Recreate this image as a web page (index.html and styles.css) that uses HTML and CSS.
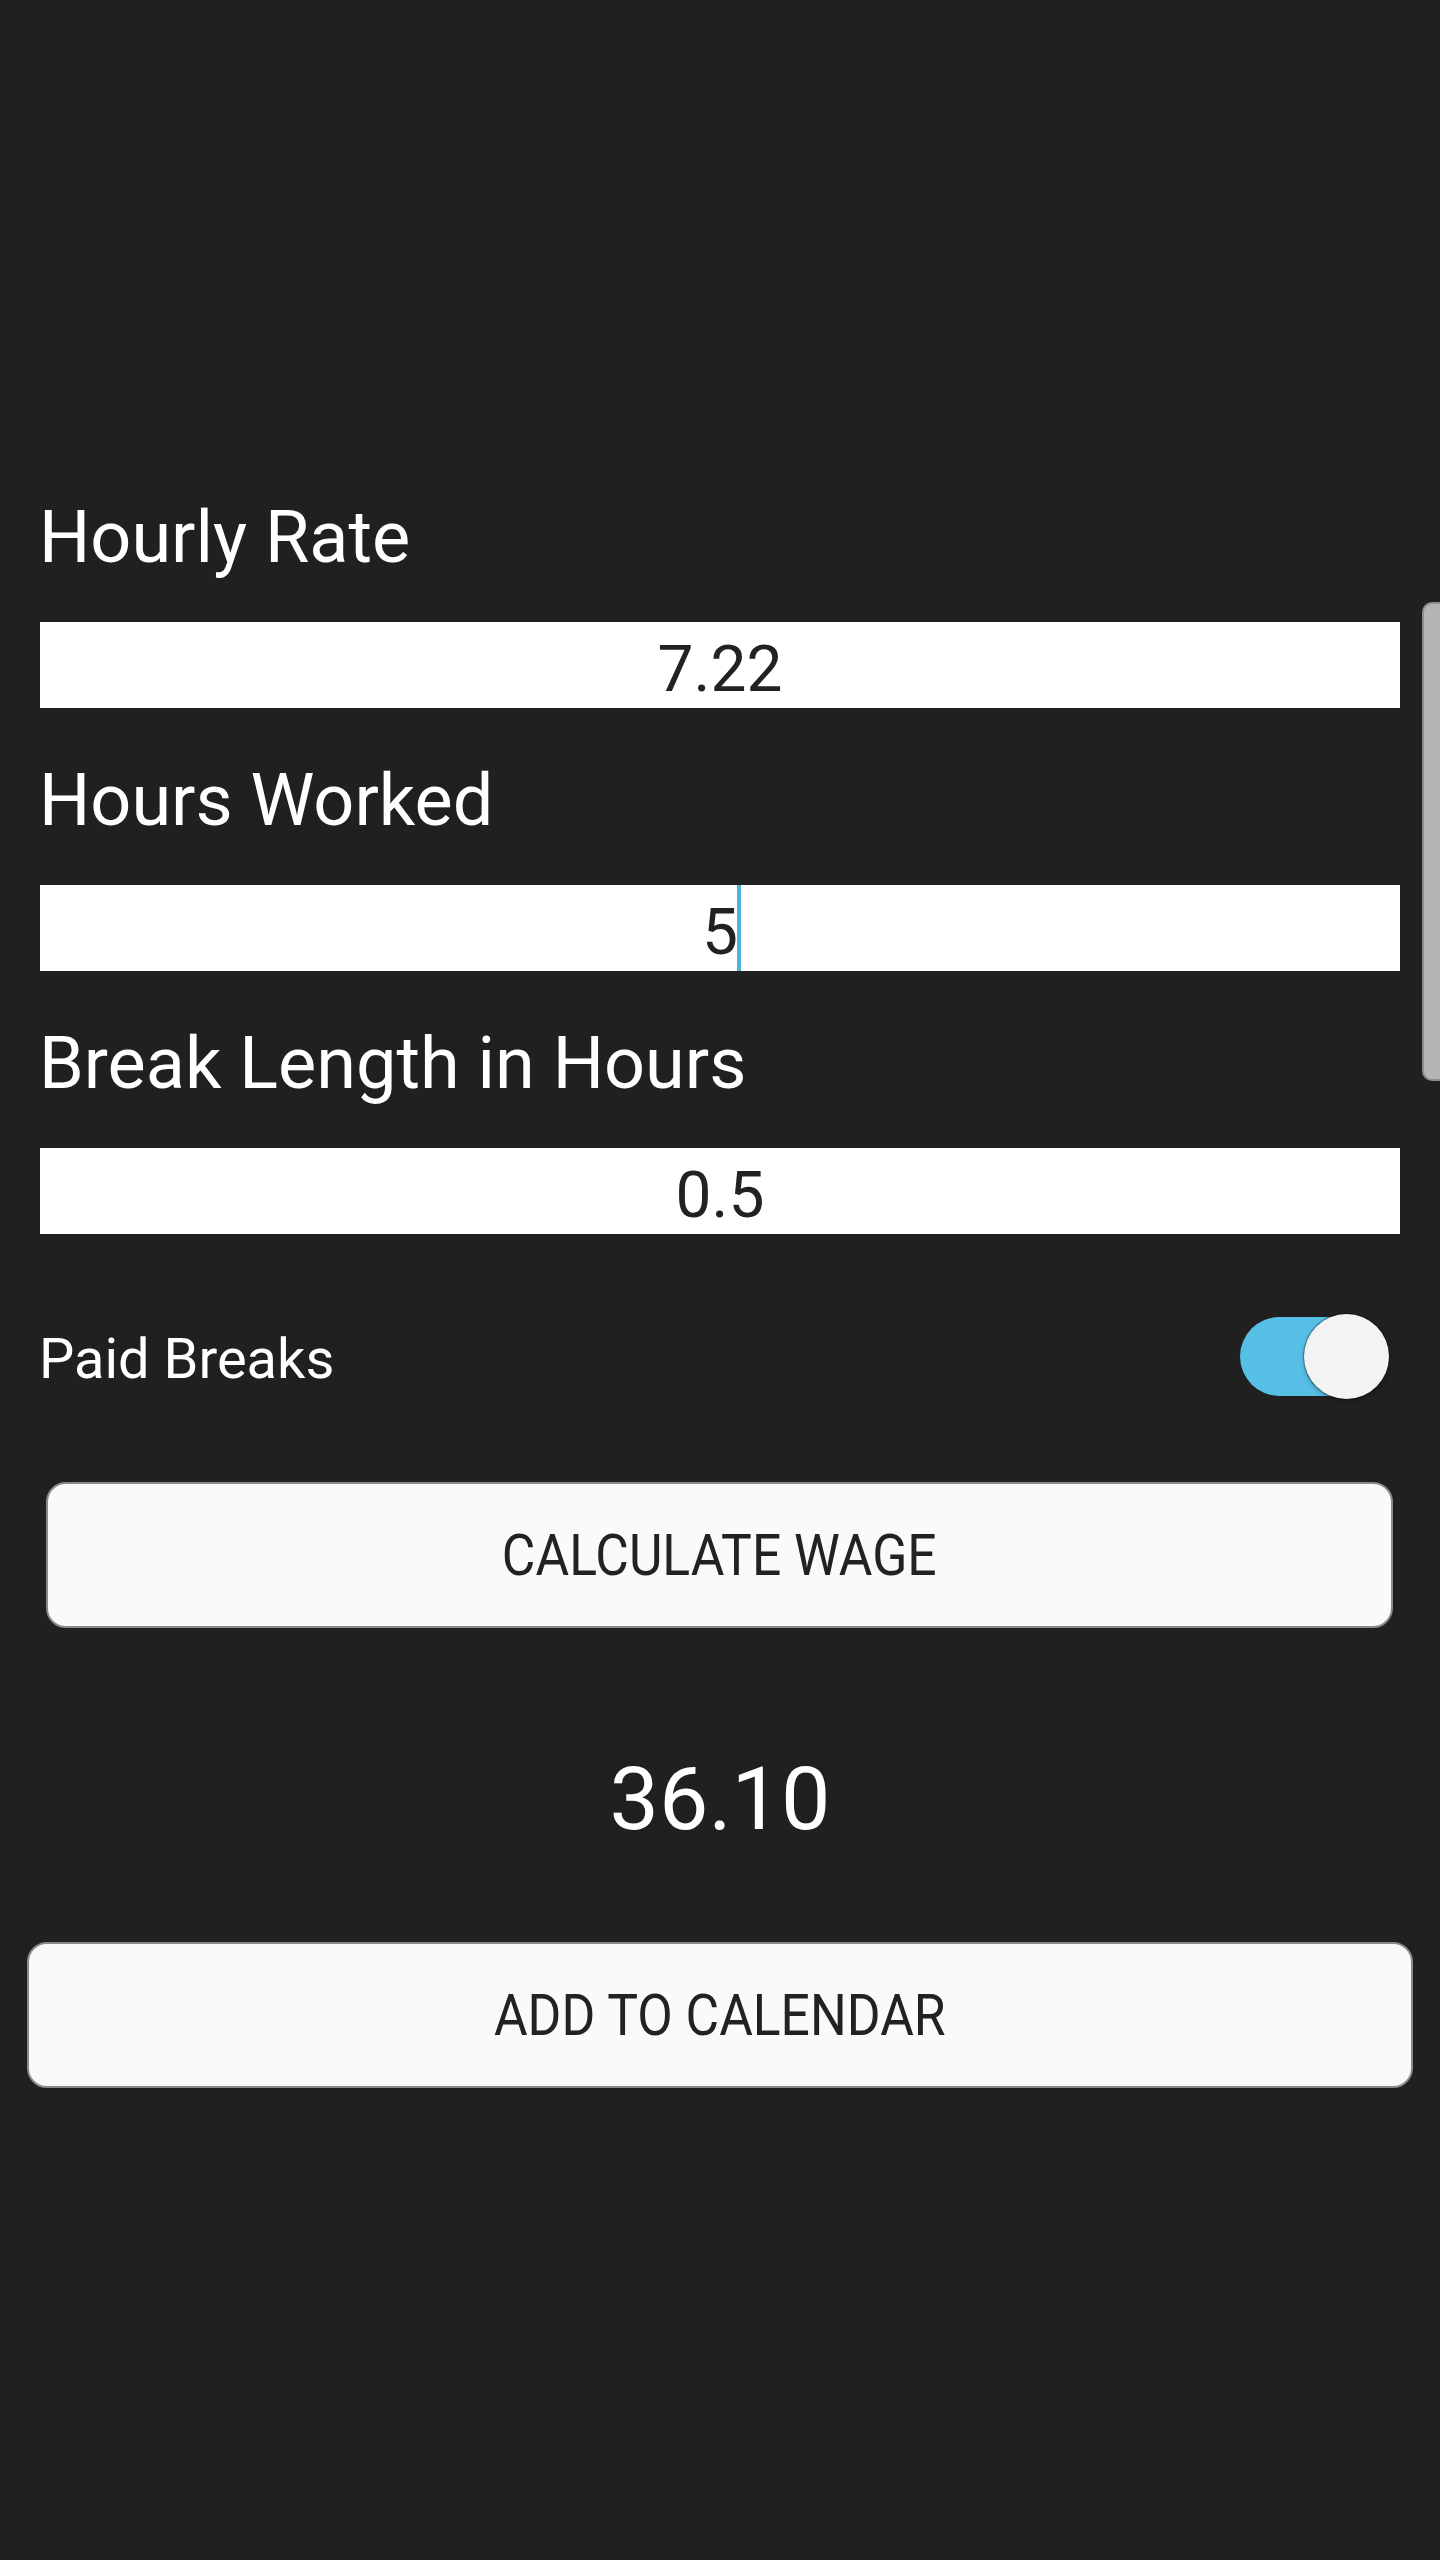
FILE: index.html
```html
<!DOCTYPE html>
<html lang="en">
<head>
  <meta charset="UTF-8" />
  <meta name="viewport" content="width=device-width, initial-scale=1.0" />
  <title>Wage Calculator</title>
  <link rel="stylesheet" href="styles.css">
</head>
<body>

  <main class="calc">
    <div class="field">
      <label class="field-label" for="rate">Hourly Rate</label>
      <input class="field-input" id="rate" type="text" value="7.22" />
    </div>

    <div class="field">
      <label class="field-label" for="hours">Hours Worked</label>
      <div class="field-box">
        <input class="field-input" id="hours" type="text" value="5" />
        <span class="caret"></span>
      </div>
    </div>

    <div class="field">
      <label class="field-label" for="break">Break Length in Hours</label>
      <input class="field-input" id="break" type="text" value="0.5" />
    </div>

    <div class="switch-row">
      <span class="switch-label">Paid Breaks</span>
      <span class="switch">
        <span class="switch-track"></span>
        <span class="switch-thumb"></span>
      </span>
    </div>

    <button class="btn btn-calc"><span>Calculate Wage</span></button>

    <p class="result">36.10</p>

    <button class="btn btn-add"><span>Add to Calendar</span></button>
  </main>

  <div class="scroll-thumb"></div>

</body>
</html>
```

FILE: styles.css
```css
html {
  background: #202020;
}

body {
  margin: 0;
  min-height: 2560px;
  font-family: Roboto, "Noto Sans", sans-serif;
  background: #202020;
  color: #fff;
}

.calc {
  padding-top: 496px;
}

.field + .field {
  margin-top: 51px;
}

.field-label {
  display: block;
  padding-left: 39px;
  margin-bottom: 42px;
  font-size: 72px;
  line-height: 84px;
}

.field-box {
  position: relative;
}

.field-input {
  display: block;
  box-sizing: border-box;
  width: calc(100% - 80px);
  height: 86px;
  margin: 0 40px;
  padding: 8px 0 0;
  border: 0;
  outline: none;
  background: #fff;
  color: #222;
  font-family: Roboto, sans-serif;
  font-size: 64px;
  text-align: center;
}

.caret {
  position: absolute;
  top: 0;
  left: calc(50% + 17px);
  width: 4px;
  height: 86px;
  background: #4fb4dc;
}

.switch-row {
  display: flex;
  align-items: center;
  justify-content: space-between;
  height: 100px;
  margin-top: 72px;
  padding: 0 51px 0 39px;
}

.switch-label {
  margin-top: 6px;
  font-size: 56px;
}

.switch {
  position: relative;
  width: 149px;
  height: 85px;
}

.switch-track {
  position: absolute;
  left: 0;
  top: 3px;
  width: 140px;
  height: 79px;
  border-radius: 40px;
  background: #56bfe6;
}

.switch-thumb {
  position: absolute;
  right: 0;
  top: 0;
  width: 85px;
  height: 85px;
  border-radius: 50%;
  background: #f3f3f3;
  box-shadow: 0 0 0 1px rgba(0,0,0,0.3), 0 2px 4px rgba(0,0,0,0.3);
}

.btn {
  display: block;
  box-sizing: border-box;
  height: 146px;
  border: 2px solid #8a8a8a;
  border-radius: 20px;
  background: #fafafa;
  color: #222;
  font-family: Roboto, sans-serif;
  font-size: 58px;
  font-weight: 400;
  text-transform: uppercase;
  text-align: center;
  padding: 0;
}

.btn span {
  display: inline-block;
  transform: scaleX(0.89);
}

.btn-calc {
  width: calc(100% - 93px);
  margin: 76px 47px 0 46px;
}

.result {
  margin: 119px 0 0;
  font-size: 88px;
  line-height: 104px;
  text-align: center;
}

.btn-add {
  width: calc(100% - 54px);
  margin: 91px 27px 0;
}

.scroll-thumb {
  position: absolute;
  top: 602px;
  right: 0;
  width: 16px;
  height: 475px;
  border: 2px solid #8d8d8d;
  border-right: 0;
  border-radius: 10px 0 0 10px;
  background: #b5b5b5;
}
```
